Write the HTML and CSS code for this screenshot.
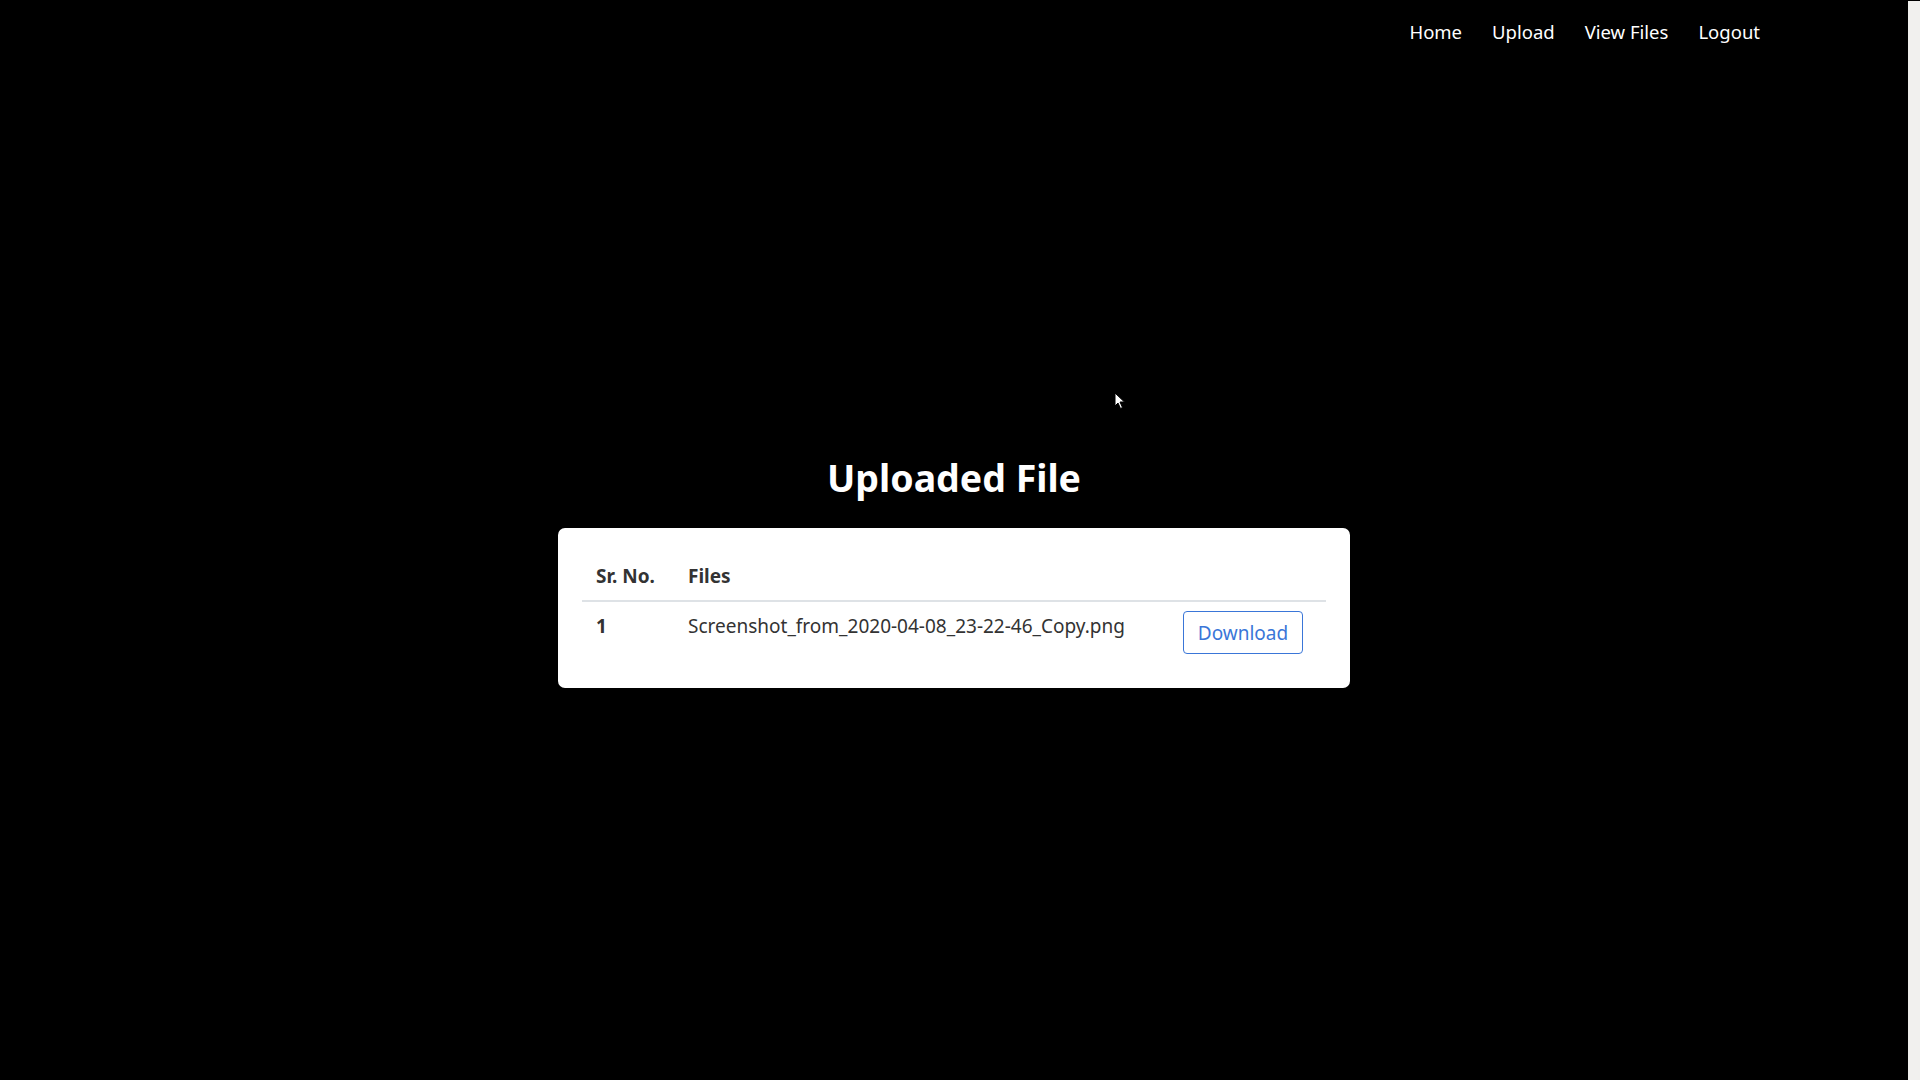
FILE: index.html
```html
<!DOCTYPE html>
<html lang="en">
<head>
<meta charset="utf-8">
<title>Uploaded File</title>
<link rel="stylesheet" href="styles.css">
</head>
<body>
<div class="frame">
  <div class="page">
    <nav class="nav">
      <a class="nav-link" href="#">Home</a>
      <a class="nav-link" href="#">Upload</a>
      <a class="nav-link" href="#">View Files</a>
      <a class="nav-link" href="#">Logout</a>
    </nav>
    <main class="main">
      <h1 class="title">Uploaded File</h1>
      <div class="card">
        <table class="table">
          <thead>
            <tr><th class="col-no">Sr. No.</th><th class="col-file">Files</th><th class="col-act"></th></tr>
          </thead>
          <tbody>
            <tr>
              <td class="col-no num">1</td>
              <td class="col-file">Screenshot_from_2020-04-08_23-22-46_Copy.png</td>
              <td class="col-act"><button class="btn">Download</button></td>
            </tr>
          </tbody>
        </table>
      </div>
    </main>
    <svg class="cursor" width="12" height="18" viewBox="0 0 12 18"><path d="M1 1 L1 14 L4 11 L6.5 16.5 L8.5 15.5 L6 10 L10.5 10 Z" fill="#fff" stroke="#000" stroke-width="1"/></svg>
  </div>
  <div class="scrollbar"></div>
</div>
</body>
</html>
```
FILE: styles.css
```css
html, body { margin: 0; padding: 0; }
body {
  background: #000;
  font-family: "Noto Sans", "Open Sans", sans-serif;
  color: #fff;
}
.frame { display: flex; height: 1080px; }
.page { flex: 1; position: relative; }
.scrollbar { width: 12px; background: #f1f0ee; border-top: 1px solid #000; }
.nav {
  display: flex;
  justify-content: flex-end;
  gap: 30px;
  padding: 20px 148px 0 0;
  height: 44px;
}
.nav-link { color: #fff; text-decoration: none; font-size: 18.5px; line-height: 24px; }
.main { display: flex; flex-direction: column; align-items: center; padding-top: 389px; }
.title { margin: 0 0 25px; font-size: 37.5px; line-height: 50px; font-weight: 700; color: #fff; }
.card {
  width: 792px;
  box-sizing: border-box;
  background: #fff;
  border-radius: 7px;
  padding: 24px 24px 25px;
}
.table { width: 100%; border-collapse: collapse; color: #333; font-size: 19px; }
.table th { text-align: left; font-weight: 700; padding: 12px 14px; border-bottom: 2px solid #dee2e6; line-height: 24px; }
.table td { text-align: left; padding: 12px 14px 7px; vertical-align: top; line-height: 24px; }
.col-no { width: 64px; }
.num { font-weight: 700; }
.table .col-act { text-align: right; padding: 9px 23px 9px 14px; }
.btn {
  display: block;
  margin-left: auto;
  font-family: inherit;
  font-size: 19px;
  color: #3a76d8;
  background: #fff;
  border: 1px solid #3a76d8;
  border-radius: 4px;
  width: 120px;
  height: 43px;
  padding: 0;
}
.cursor { position: absolute; left: 1114px; top: 392px; }
```
